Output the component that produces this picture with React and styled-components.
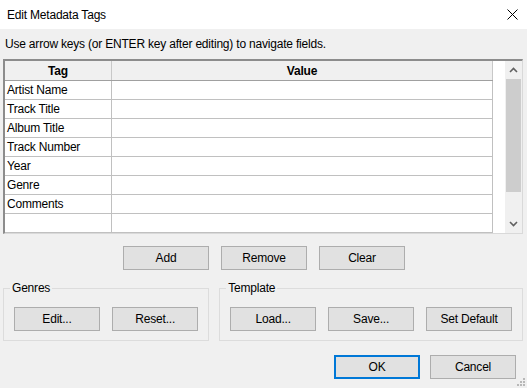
import React from "react";
import styled, { createGlobalStyle } from "styled-components";

const Global = createGlobalStyle`
  html, body { margin: 0; padding: 0; background: #f0f0f0; }
  body { font-family: "Liberation Sans", Arial, sans-serif; font-size: 12px; color: #000; letter-spacing: -0.2px; }
  * { box-sizing: border-box; }
`;

const Window = styled.div`
  position: relative;
  width: 527px;
  height: 388px;
  background: #f0f0f0;
  display: flex;
  flex-direction: column;
  overflow: hidden;
`;

const TitleBar = styled.div`
  height: 29px;
  background: #fff;
  display: flex;
  align-items: center;
  justify-content: space-between;
  padding: 0 9px 0 7px;
  font-size: 12px;
`;

const Hint = styled.div`
  height: 30px;
  display: flex;
  align-items: center;
  padding-left: 5px;
  font-size: 12px;
`;

const GridFrame = styled.div`
  margin: 0 4px 0 3px;
  height: 175px;
  display: flex;
  border-top: 2px solid #8c8c8c;
  border-left: 2px solid #8c8c8c;
  border-right: 1px solid #d9d9d9;
  border-bottom: 1px solid #d9d9d9;
  background: #fff;
`;

const Table = styled.div`
  display: flex;
  flex-direction: column;
`;

const Row = styled.div`
  display: grid;
  grid-template-columns: 107px 381px;
  height: ${(p) => (p.$header ? 20 : 19)}px;
  border-bottom: 1px solid ${(p) => (p.$header ? "#a0a0a0" : "#c0c0c0")};
  background: ${(p) => (p.$header ? "#f0f0f0" : "#fff")};
`;

const Cell = styled.div`
  border-right: 1px solid ${(p) => (p.$header ? "#c8c8c8" : "#c0c0c0")};
  display: flex;
  align-items: center;
  justify-content: ${(p) => (p.$header ? "center" : "flex-start")};
  padding-left: ${(p) => (p.$header ? 0 : 2)}px;
  font-weight: ${(p) => (p.$header ? 700 : 400)};
  font-size: 12px;
  white-space: nowrap;
`;

const Filler = styled.div`
  width: 12px;
  background: #fff;
`;

const ScrollBar = styled.div`
  width: 17px;
  background: #f0f0f0;
  display: flex;
  flex-direction: column;
  align-items: center;
`;

const ArrowBtn = styled.div`
  height: 18px;
  width: 100%;
  display: flex;
  align-items: center;
  justify-content: center;
`;

const Thumb = styled.div`
  width: 15px;
  height: 113px;
  background: #cdcdcd;
`;

const Track = styled.div`
  flex: 1;
`;

const ButtonRow = styled.div`
  margin-top: 12px;
  display: flex;
  justify-content: center;
  gap: 12px;
  padding-left: 1px;
`;

const Button = styled.button`
  width: 86px;
  height: 24px;
  margin: 0;
  padding: 0;
  background: #e1e1e1;
  border: ${(p) => (p.$default ? "2px solid #0078d7" : "1px solid #adadad")};
  font-family: "Liberation Sans", Arial, sans-serif;
  font-size: 12px;
  letter-spacing: -0.2px;
  color: #000;
`;

const GroupRow = styled.div`
  margin-top: 11px;
  display: flex;
  gap: 10px;
  padding: 0 4px 0 3px;
`;

const Group = styled.fieldset`
  margin: 0;
  width: ${(p) => p.$w}px;
  padding: 11px 10px 9px 10px;
  border: 1px solid #dcdcdc;
  display: flex;
  justify-content: space-between;
`;

const Legend = styled.legend`
  margin-left: -4px;
  padding: 0 2px;
  font-size: 12px;
  line-height: 15px;
`;

const Footer = styled.div`
  margin-top: 14px;
  display: flex;
  justify-content: flex-end;
  gap: 10px;
  padding-right: 11px;
`;

const Grip = styled.svg`
  position: absolute;
  right: 1px;
  bottom: 1px;
`;

const rows = ["Artist Name", "Track Title", "Album Title", "Track Number", "Year", "Genre", "Comments", ""];

const Chevron = ({ up }) => (
  <svg width="9" height="6" viewBox="0 0 9 6">
    <path
      d={up ? "M1 5 L4.5 1.5 L8 5" : "M1 1 L4.5 4.5 L8 1"}
      fill="none"
      stroke="#606060"
      strokeWidth="1.6"
    />
  </svg>
);

export default function App() {
  return (
    <>
      <Global />
      <Window>
        <TitleBar>
          <span>Edit Metadata Tags</span>
          <svg width="11" height="11" viewBox="0 0 11 11">
            <path d="M0.5 0.5 L10.5 10.5 M10.5 0.5 L0.5 10.5" stroke="#000" strokeWidth="1" fill="none" />
          </svg>
        </TitleBar>
        <Hint>Use arrow keys (or ENTER key after editing) to navigate fields.</Hint>
        <GridFrame>
          <Table>
            <Row $header>
              <Cell $header>Tag</Cell>
              <Cell $header>Value</Cell>
            </Row>
            {rows.map((r, i) => (
              <Row key={i}>
                <Cell>{r}</Cell>
                <Cell />
              </Row>
            ))}
          </Table>
          <Filler />
          <ScrollBar>
            <ArrowBtn>
              <Chevron up />
            </ArrowBtn>
            <Thumb />
            <Track />
            <ArrowBtn>
              <Chevron />
            </ArrowBtn>
          </ScrollBar>
        </GridFrame>
        <ButtonRow>
          <Button>Add</Button>
          <Button>Remove</Button>
          <Button>Clear</Button>
        </ButtonRow>
        <GroupRow>
          <Group $w={207}>
            <Legend>Genres</Legend>
            <Button>Edit...</Button>
            <Button>Reset...</Button>
          </Group>
          <Group $w={305}>
            <Legend>Template</Legend>
            <Button>Load...</Button>
            <Button>Save...</Button>
            <Button>Set Default</Button>
          </Group>
        </GroupRow>
        <Footer>
          <Button $default>OK</Button>
          <Button>Cancel</Button>
        </Footer>
        <Grip width="10" height="10" viewBox="0 0 10 10">
          {[
            [7, 1], [4, 4], [7, 4], [1, 7], [4, 7], [7, 7],
          ].map(([x, y], i) => (
            <rect key={i} x={x} y={y} width="2" height="2" fill="#b8b8b8" />
          ))}
        </Grip>
      </Window>
    </>
  );
}
